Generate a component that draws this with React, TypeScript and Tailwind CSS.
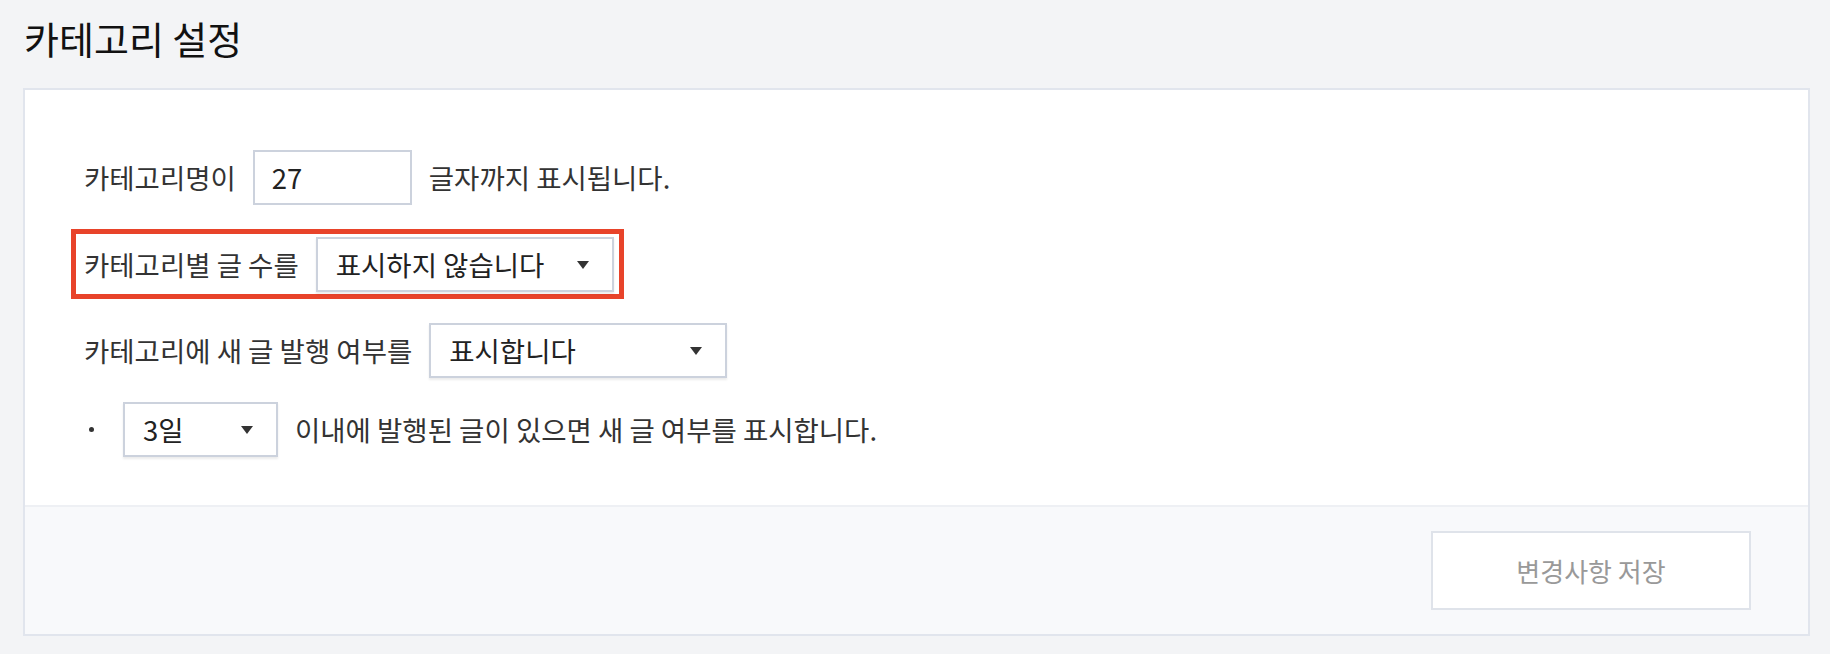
import React from 'react';

const font = { fontFamily: '"Noto Sans CJK KR", "Noto Sans", sans-serif' };

function Arrow() {
    return (
        <svg className="w-[12px] h-[8px] flex-shrink-0" viewBox="0 0 12 8">
            <polygon points="0,0 12,0 6,8" fill="#333" />
        </svg>
    );
}

function SelectBox({ value, width }: { value: string; width: string }) {
    return (
        <div
            className={`${width} h-[55px] flex items-center justify-between pl-[18px] pr-[23px] bg-white border-2 border-[#ccd2dd] shadow-[0_2px_2px_rgba(0,0,0,0.08)] text-[#222]`}
        >
            <span>{value}</span>
            <Arrow />
        </div>
    );
}

export default function App() {
    return (
        <div style={font} className="min-h-screen bg-[#f3f4f6] pl-[23px] pr-[20px] pt-[19px] pb-[19px]">
            <h1 className="text-[38px] leading-none text-[#111] pl-[1px] mb-[31px]">카테고리 설정</h1>

            <div className="bg-white border-2 border-[#e1e5ed]">
                {/* settings rows */}
                <div className="flex flex-col items-start gap-6 pl-[59px] pt-[60px] pb-[48px] text-[27.5px] text-[#333]">
                    <div className="flex items-center gap-[17px]">
                        <span>카테고리명이</span>
                        <div className="w-[159px] h-[55px] flex items-center pl-[17px] border-2 border-[#ccd2dd] text-[#222]">
                            27
                        </div>
                        <span>글자까지 표시됩니다.</span>
                    </div>

                    <div className="flex items-center gap-[17px] -ml-[13px] pl-[8px] pr-[5px] pt-[3px] pb-[2px] border-[5px] border-[#e8432a]">
                        <span>카테고리별 글 수를</span>
                        <SelectBox value="표시하지 않습니다" width="w-[298px]" />
                    </div>

                    <div className="flex items-center gap-[17px]">
                        <span>카테고리에 새 글 발행 여부를</span>
                        <SelectBox value="표시합니다" width="w-[298px]" />
                    </div>

                    <div className="flex items-center">
                        <span className="w-[5px] h-[5px] rounded-full bg-[#333] ml-[5px] mr-[29px]" />
                        <SelectBox value="3일" width="w-[155px]" />
                        <span className="ml-[17px]">이내에 발행된 글이 있으면 새 글 여부를 표시합니다.</span>
                    </div>
                </div>

                {/* footer */}
                <div className="flex justify-end bg-[#f8f9fb] border-t-2 border-[#eef0f4] pt-[24px] pb-[24px] pr-[57px]">
                    <button className="w-[320px] h-[79px] bg-white border-2 border-[#dfe3ea] text-[26px] text-[#999]">
                        변경사항 저장
                    </button>
                </div>
            </div>
        </div>
    );
}
